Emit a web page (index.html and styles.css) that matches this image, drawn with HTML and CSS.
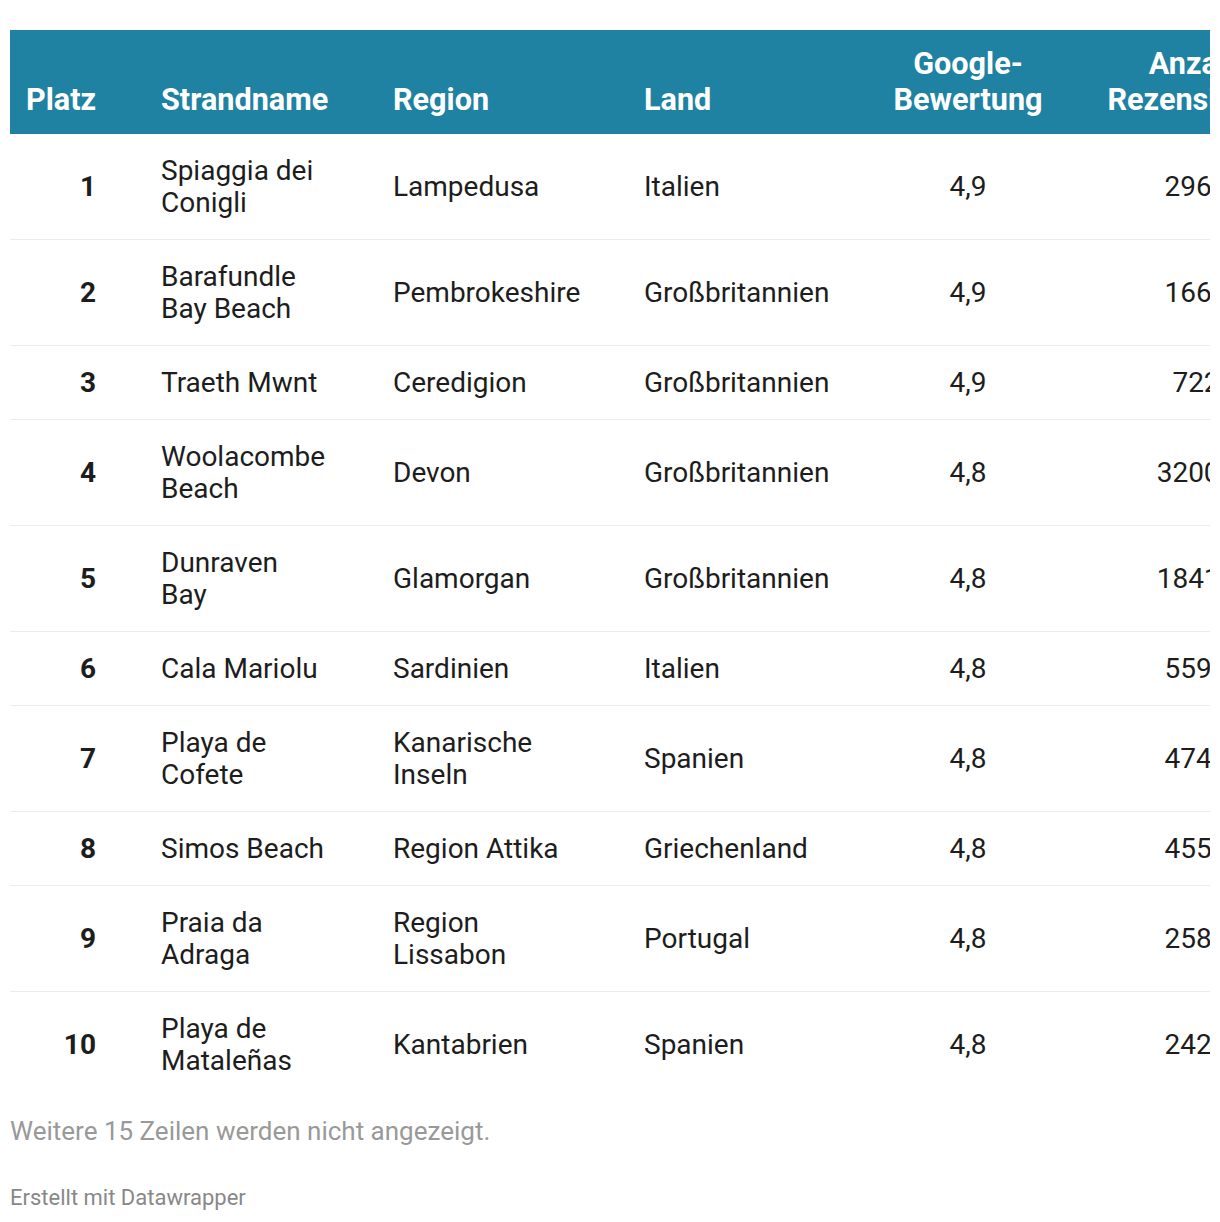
FILE: index.html
```html
<!DOCTYPE html>
<html lang="de">
<head>
<meta charset="utf-8">
<title>Strände</title>
<link rel="stylesheet" href="styles.css">
</head>
<body>
<div class="chart">
  <div class="table-wrap">
    <table class="data">
      <colgroup>
        <col class="c-rank"><col class="c-name"><col class="c-region"><col class="c-land"><col class="c-rating"><col class="c-count">
      </colgroup>
      <thead>
        <tr>
          <th class="rank">Platz</th>
          <th>Strandname</th>
          <th>Region</th>
          <th>Land</th>
          <th class="center">Google-Bewertung</th>
          <th class="center">Anzahl Rezensionen</th>
        </tr>
      </thead>
      <tbody>
        <tr><td class="rank">1</td><td class="name">Spiaggia dei Conigli</td><td class="region">Lampedusa</td><td>Italien</td><td class="center">4,9</td><td class="center">2963</td></tr>
        <tr><td class="rank">2</td><td class="name">Barafundle Bay Beach</td><td class="region">Pembrokeshire</td><td>Großbritannien</td><td class="center">4,9</td><td class="center">1664</td></tr>
        <tr><td class="rank">3</td><td class="name">Traeth Mwnt</td><td class="region">Ceredigion</td><td>Großbritannien</td><td class="center">4,9</td><td class="center">722</td></tr>
        <tr><td class="rank">4</td><td class="name">Woolacombe Beach</td><td class="region">Devon</td><td>Großbritannien</td><td class="center">4,8</td><td class="center">32001</td></tr>
        <tr><td class="rank">5</td><td class="name">Dunraven Bay</td><td class="region">Glamorgan</td><td>Großbritannien</td><td class="center">4,8</td><td class="center">18412</td></tr>
        <tr><td class="rank">6</td><td class="name">Cala Mariolu</td><td class="region">Sardinien</td><td>Italien</td><td class="center">4,8</td><td class="center">5591</td></tr>
        <tr><td class="rank">7</td><td class="name">Playa de Cofete</td><td class="region">Kanarische Inseln</td><td>Spanien</td><td class="center">4,8</td><td class="center">4745</td></tr>
        <tr><td class="rank">8</td><td class="name">Simos Beach</td><td class="region">Region Attika</td><td>Griechenland</td><td class="center">4,8</td><td class="center">4553</td></tr>
        <tr><td class="rank">9</td><td class="name">Praia da Adraga</td><td class="region">Region Lissabon</td><td>Portugal</td><td class="center">4,8</td><td class="center">2584</td></tr>
        <tr class="last"><td class="rank">10</td><td class="name">Playa de Mataleñas</td><td class="region">Kantabrien</td><td>Spanien</td><td class="center">4,8</td><td class="center">2421</td></tr>
      </tbody>
    </table>
  </div>
  <p class="more">Weitere 15 Zeilen werden nicht angezeigt.</p>
  <p class="credit">Erstellt mit Datawrapper</p>
</div>
</body>
</html>
```

FILE: styles.css
```css
html, body {
  margin: 0;
  padding: 0;
  background: #ffffff;
}

body {
  font-family: Roboto, "Noto Sans", "Liberation Sans", sans-serif;
  color: #1d1d1d;
}

.chart {
  padding: 30px 10px 0 10px;
}

.table-wrap {
  width: 1200px;
  overflow: hidden;
}

.data {
  border-collapse: collapse;
  table-layout: fixed;
  width: 1301px;
}

.c-rank { width: 135px; }
.c-name { width: 232px; }
.c-region { width: 251px; }
.c-land { width: 227px; }
.c-rating { width: 226px; }
.c-count { width: 230px; }

.data th {
  background: #1f82a2;
  color: #ffffff;
  font-size: 30.6px;
  font-weight: 700;
  line-height: 36px;
  text-align: left;
  vertical-align: bottom;
  padding: 16px 16px 16px 16px;
}

.data td {
  font-size: 28px;
  line-height: 32px;
  vertical-align: middle;
  padding: 21px 16px 20px 16px;
  border-bottom: 1px solid #ececec;
}

.data tr.last td {
  border-bottom: none;
}

.data .rank {
  text-align: right;
  padding-right: 49px;
}

.data td.rank {
  font-weight: 700;
}

.data td.name {
  padding-right: 51px;
}

.data td.region {
  padding-right: 40px;
}

.data .center {
  text-align: center;
}

.more {
  margin: 18px 0 0 0;
  font-size: 26px;
  line-height: 32px;
  color: #999999;
}

.credit {
  margin: 38px 0 0 0;
  font-size: 22px;
  line-height: 26px;
  color: #888888;
}
```
